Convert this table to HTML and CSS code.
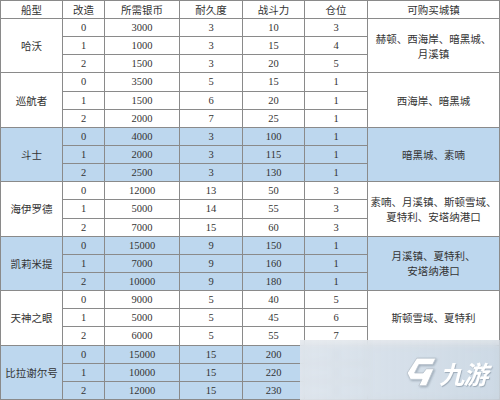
FILE: index.html
```html
<!DOCTYPE html>
<html lang="zh">
<head>
<meta charset="utf-8">
<link rel="stylesheet" href="styles.css">
</head>
<body>
<div class="page">
<table class="ships">
  <colgroup>
    <col class="c-name"><col class="c-mod"><col class="c-cost"><col class="c-dur"><col class="c-pow"><col class="c-slot"><col class="c-town">
  </colgroup>
  <thead>
    <tr><th>船型</th><th>改造</th><th>所需银币</th><th>耐久度</th><th>战斗力</th><th>仓位</th><th>可购买城镇</th></tr>
  </thead>
  <tbody>
    <tr><td rowspan="3">哈沃</td><td>0</td><td>3000</td><td>3</td><td>10</td><td>3</td><td rowspan="3">赫顿、西海岸、暗黑城、<br>月溪镇</td></tr>
    <tr><td>1</td><td>1000</td><td>3</td><td>15</td><td>4</td></tr>
    <tr><td>2</td><td>1500</td><td>3</td><td>20</td><td>5</td></tr>
  </tbody>
  <tbody>
    <tr><td rowspan="3">巡航者</td><td>0</td><td>3500</td><td>5</td><td>15</td><td>1</td><td rowspan="3">西海岸、暗黑城</td></tr>
    <tr><td>1</td><td>1500</td><td>6</td><td>20</td><td>1</td></tr>
    <tr><td>2</td><td>2000</td><td>7</td><td>25</td><td>1</td></tr>
  </tbody>
  <tbody class="hl">
    <tr><td rowspan="3">斗士</td><td>0</td><td>4000</td><td>3</td><td>100</td><td>1</td><td rowspan="3">暗黑城、素喃</td></tr>
    <tr><td>1</td><td>2000</td><td>3</td><td>115</td><td>1</td></tr>
    <tr><td>2</td><td>2500</td><td>3</td><td>130</td><td>1</td></tr>
  </tbody>
  <tbody>
    <tr><td rowspan="3">海伊罗德</td><td>0</td><td>12000</td><td>13</td><td>50</td><td>3</td><td rowspan="3">素喃、月溪镇、斯顿雪域、<br>夏特利、安塔纳港口</td></tr>
    <tr><td>1</td><td>5000</td><td>14</td><td>55</td><td>3</td></tr>
    <tr><td>2</td><td>7000</td><td>15</td><td>60</td><td>3</td></tr>
  </tbody>
  <tbody class="hl">
    <tr><td rowspan="3">凯莉米提</td><td>0</td><td>15000</td><td>9</td><td>150</td><td>1</td><td rowspan="3">月溪镇、夏特利、<br>安塔纳港口</td></tr>
    <tr><td>1</td><td>7000</td><td>9</td><td>160</td><td>1</td></tr>
    <tr><td>2</td><td>10000</td><td>9</td><td>180</td><td>1</td></tr>
  </tbody>
  <tbody>
    <tr><td rowspan="3">天神之眼</td><td>0</td><td>9000</td><td>5</td><td>40</td><td>5</td><td rowspan="3">斯顿雪域、夏特利</td></tr>
    <tr><td>1</td><td>5000</td><td>5</td><td>45</td><td>6</td></tr>
    <tr><td>2</td><td>6000</td><td>5</td><td>55</td><td>7</td></tr>
  </tbody>
  <tbody class="hl">
    <tr><td rowspan="3">比拉谢尔号</td><td>0</td><td>15000</td><td>15</td><td>200</td><td>1</td><td rowspan="3"></td></tr>
    <tr><td>1</td><td>10000</td><td>15</td><td>220</td><td>1</td></tr>
    <tr><td>2</td><td>12000</td><td>15</td><td>230</td><td>1</td></tr>
  </tbody>
</table>
<div class="watermark">
  <svg class="wm-icon" viewBox="0 0 32 32" width="34" height="34" aria-hidden="true">
    <path d="M12 2 L30 2 L27 8 L14 8 L10 16 L18 16 L21 12 L28 12 L21 28 L14 28 L17 22 L6 22 L3 16 Z" fill="#ffffff" stroke="#b9c3cc" stroke-width="0.8"/>
  </svg>
  <span class="wm-text">九游</span>
</div>
</div>
</body>
</html>
```
FILE: styles.css
```css
html, body {
  margin: 0;
  padding: 0;
  background: #ffffff;
}

.page {
  position: relative;
  width: 500px;
  height: 400px;
  overflow: hidden;
}

.ships {
  table-layout: fixed;
  border-collapse: collapse;
  width: 499px;
  height: 400px;
  font-family: "Liberation Serif", "Noto Sans CJK SC", serif;
  font-size: 10.5px;
  color: #333333;
}

.c-name { width: 62px; }
.c-mod { width: 42px; }
.c-cost { width: 75px; }
.c-dur { width: 63px; }
.c-pow { width: 62px; }
.c-slot { width: 63px; }
.c-town { width: 132px; }

.ships th,
.ships td {
  border: 1px solid #8a8a8a;
  padding: 0;
  height: 17px;
  line-height: 15px;
  text-align: center;
  vertical-align: middle;
  font-weight: normal;
  white-space: nowrap;
}

.ships th {
  font-family: "Noto Sans CJK SC", sans-serif;
}

.ships td[rowspan] {
  font-family: "Noto Sans CJK SC", sans-serif;
}

.hl td {
  background: #bdd7ee;
}

.watermark {
  position: absolute;
  left: 300px;
  top: 340px;
  width: 200px;
  height: 60px;
  background: linear-gradient(to right, rgba(228, 232, 237, 0.85), rgba(210, 218, 226, 0.75));
  backdrop-filter: blur(3px);
  display: flex;
  align-items: center;
  gap: 4px;
  padding-left: 104px;
  padding-top: 6px;
  box-sizing: border-box;
}

.wm-icon {
  flex: none;
  filter: drop-shadow(1px 1px 1px rgba(120, 135, 150, 0.6));
}

.wm-text {
  font-family: "Noto Sans CJK SC", sans-serif;
  font-size: 25px;
  font-weight: bold;
  color: #ffffff;
  transform: skewX(-14deg);
  text-shadow: 1px 1px 1px rgba(120, 135, 150, 0.6);
  letter-spacing: -1px;
  white-space: nowrap;
}
```
